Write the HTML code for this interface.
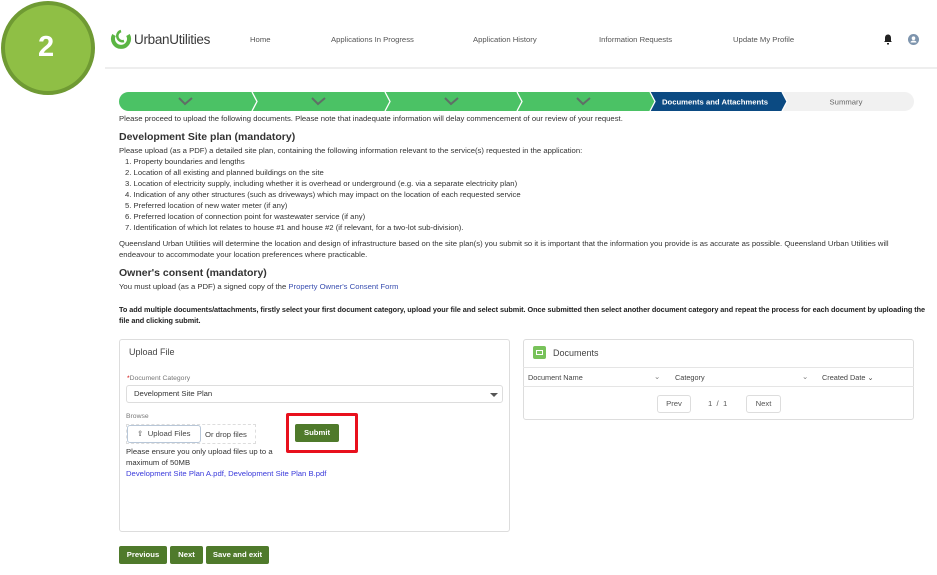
<!DOCTYPE html>
<html><head><meta charset="utf-8"><style>
*{margin:0;padding:0;box-sizing:border-box}
body{width:937px;height:575px;background:#fff;font-family:"Liberation Sans",sans-serif;color:#333;position:relative;overflow:hidden;font-size:7.7px}
.a{position:absolute;white-space:nowrap}
.nav{font-size:7.7px;color:#555;top:35px}
h3{font-size:10.5px;font-weight:bold;color:#333}
.btn{position:absolute;background:#4f7a2b;color:#fff;font-size:7.7px;font-weight:bold;border-radius:2px;text-align:center;line-height:18px;height:18px;top:546px}
</style></head><body>
<div class="a" style="left:1px;top:1px;width:94px;height:94px;border-radius:50%;background:#8fbf45;border:4px solid #6f9a33"></div>
<div class="a" style="left:38px;top:31px;color:#fff;font-size:29px;font-weight:bold">2</div>
<svg class="a" style="left:110px;top:29px" width="22" height="22" viewBox="0 0 22 22"><path d="M4 6 A8 8 0 1 0 18 6" fill="none" stroke="#5ab543" stroke-width="4"/><path d="M11 2 a5 5 0 0 0 3 10" fill="none" stroke="#5ab543" stroke-width="2.5"/></svg>
<div class="a" style="left:134px;top:32px;font-size:13.5px;color:#3a3a3a;letter-spacing:-0.3px">Urban<span style="font-weight:300">Utilities</span></div>
<div class="a nav" style="left:250px">Home</div>
<div class="a nav" style="left:331px">Applications In Progress</div>
<div class="a nav" style="left:473px">Application History</div>
<div class="a nav" style="left:599px">Information Requests</div>
<div class="a nav" style="left:733px">Update My Profile</div>
<svg class="a" style="left:883px;top:34px" width="10" height="11" viewBox="0 0 10 11"><path d="M5 0.5c-2 0-3 1.5-3 3.5v3L1 8h8L8 7V4c0-2-1-3.5-3-3.5z M4 9h2v1.5H4z" fill="#222"/></svg>
<svg class="a" style="left:908px;top:34px" width="11" height="11"><circle cx="5.5" cy="5.5" r="5.5" fill="#7d94ad"/><circle cx="5.5" cy="4.2" r="1.8" fill="#fff"/><path d="M2.5 8.5a3 2 0 0 1 6 0z" fill="#fff"/></svg>
<div class="a" style="left:105px;top:67px;width:832px;height:2px;background:#eee"></div>
<svg class="a" style="left:119px;top:92px" width="795" height="19">
<rect x="0" y="0" width="795" height="19" rx="9.5" fill="#f1f1f1"/>
<path d="M9.5 0H531l5 9.5-5 9.5H9.5a9.5 9.5 0 0 1 0-19z" fill="#4bc265"/>
<path d="M531 0h132l5 9.5-5 9.5H531l5-9.5z" fill="#0b4a82"/>
<g fill="none" stroke="#fff" stroke-width="1.3"><path d="M133 0l5 9.5-5 9.5M266 0l5 9.5-5 9.5M398 0l5 9.5-5 9.5M531 0l5 9.5-5 9.5M663 0l5 9.5-5 9.5"/></g>
<g fill="none" stroke="#5f6f66" stroke-width="2"><path d="M60 6l6 6 7-6M193 6l6 6 7-6M326 6l6 6 7-6M458 6l6 6 7-6"/></g>
<text x="596" y="12.5" fill="#fff" font-size="7.7" font-weight="bold" text-anchor="middle" font-family="Liberation Sans">Documents and Attachments</text>
<text x="727" y="12.5" fill="#666" font-size="7.7" text-anchor="middle" font-family="Liberation Sans">Summary</text>
</svg>
<div class="a" style="left:119px;top:114px">Please proceed to upload the following documents. Please note that inadequate information will delay commencement of our review of your request.</div>
<h3 class="a" style="left:119px;top:131px">Development Site plan (mandatory)</h3>
<div class="a" style="left:119px;top:145px;line-height:11px">Please upload (as a PDF) a detailed site plan, containing the following information relevant to the service(s) requested in the application:<br>
<span style="padding-left:6px">1. Property boundaries and lengths</span><br>
<span style="padding-left:6px">2. Location of all existing and planned buildings on the site</span><br>
<span style="padding-left:6px">3. Location of electricity supply, including whether it is overhead or underground (e.g. via a separate electricity plan)</span><br>
<span style="padding-left:6px">4. Indication of any other structures (such as driveways) which may impact on the location of each requested service</span><br>
<span style="padding-left:6px">5. Preferred location of new water meter (if any)</span><br>
<span style="padding-left:6px">6. Preferred location of connection point for wastewater service (if any)</span><br>
<span style="padding-left:6px">7. Identification of which lot relates to house #1 and house #2 (if relevant, for a two-lot sub-division).</span></div>
<div class="a" style="left:119px;top:238px;line-height:11px">Queensland Urban Utilities will determine the location and design of infrastructure based on the site plan(s) you submit so it is important that the information you provide is as accurate as possible. Queensland Urban Utilities will<br>endeavour to accommodate your location preferences where practicable.</div>
<h3 class="a" style="left:119px;top:267px">Owner's consent (mandatory)</h3>
<div class="a" style="left:119px;top:282px">You must upload (as a PDF) a signed copy of the <span style="color:#3a4fb0">Property Owner's Consent Form</span></div>
<div class="a" style="left:119px;top:304px;font-weight:bold;line-height:11px;color:#222;font-size:7.3px;letter-spacing:-0.05px">To add multiple documents/attachments, firstly select your first document category, upload your file and select submit. Once submitted then select another document category and repeat the process for each document by uploading the<br>file and clicking submit.</div>
<div class="a" style="left:119px;top:339px;width:391px;height:193px;border:1px solid #ddd;border-radius:3px"></div>
<div class="a" style="left:129px;top:347px;font-size:9px;color:#444">Upload File</div>
<div class="a" style="left:127px;top:375px;font-size:6.8px;color:#777"><span style="color:#c00">*</span>Document Category</div>
<div class="a" style="left:126px;top:385px;width:377px;height:18px;border:1px solid #ddd;border-radius:3px"></div>
<div class="a" style="left:134px;top:389px;color:#333">Development Site Plan</div>
<div class="a" style="left:490px;top:393px;width:0;height:0;border-left:4px solid transparent;border-right:4px solid transparent;border-top:4px solid #555"></div>
<div class="a" style="left:126px;top:413px;font-size:6.8px;color:#777">Browse</div>
<div class="a" style="left:126px;top:424px;width:130px;height:20px;border:1px dashed #ddd"></div>
<div class="a" style="left:127px;top:425px;width:74px;height:18px;border:1px solid #b8c7d8;border-radius:3px;background:#fff;line-height:16px;padding-left:9px;color:#444">⇧&nbsp; Upload Files</div>
<div class="a" style="left:205px;top:430px;color:#444">Or drop files</div>
<div class="a" style="left:126px;top:446px;line-height:11px">Please ensure you only upload files up to a<br>maximum of 50MB</div>
<div class="a" style="left:126px;top:469px;color:#3a3adb">Development Site Plan A.pdf, Development Site Plan B.pdf</div>
<div class="a" style="left:286px;top:413px;width:72px;height:40px;border:3px solid #e8101d;border-radius:2px"></div>
<div class="btn" style="left:295px;top:424px;width:44px">Submit</div>
<div class="a" style="left:523px;top:339px;width:391px;height:81px;border:1px solid #ddd;border-radius:3px"></div>
<div class="a" style="left:533px;top:346px;width:13px;height:13px;background:#78c25a;border-radius:2px"></div>
<div class="a" style="left:536px;top:350px;width:7px;height:5px;border:1px solid #fff"></div>
<div class="a" style="left:553px;top:348px;font-size:9px;color:#444">Documents</div>
<div class="a" style="left:523px;top:367px;width:391px;height:20px;border-top:1px solid #e5e5e5;border-bottom:1px solid #e5e5e5"></div>
<div class="a" style="left:528px;top:373px;font-size:7.3px;color:#444">Document Name</div>
<div class="a" style="left:654px;top:372px;color:#777">⌄</div>
<div class="a" style="left:675px;top:373px;font-size:7.3px;color:#444">Category</div>
<div class="a" style="left:802px;top:372px;color:#777">⌄</div>
<div class="a" style="left:822px;top:373px;font-size:7.3px;color:#444">Created Date ⌄</div>
<div class="a" style="left:657px;top:395px;width:34px;height:18px;border:1px solid #ddd;border-radius:3px;text-align:center;line-height:16px;color:#555">Prev</div>
<div class="a" style="left:708px;top:399px;color:#555">1 &nbsp;/ &nbsp;1</div>
<div class="a" style="left:746px;top:395px;width:35px;height:18px;border:1px solid #ddd;border-radius:3px;text-align:center;line-height:16px;color:#555">Next</div>
<div class="btn" style="left:119px;width:48px">Previous</div>
<div class="btn" style="left:170px;width:33px">Next</div>
<div class="btn" style="left:206px;width:63px">Save and exit</div>
</body></html>
